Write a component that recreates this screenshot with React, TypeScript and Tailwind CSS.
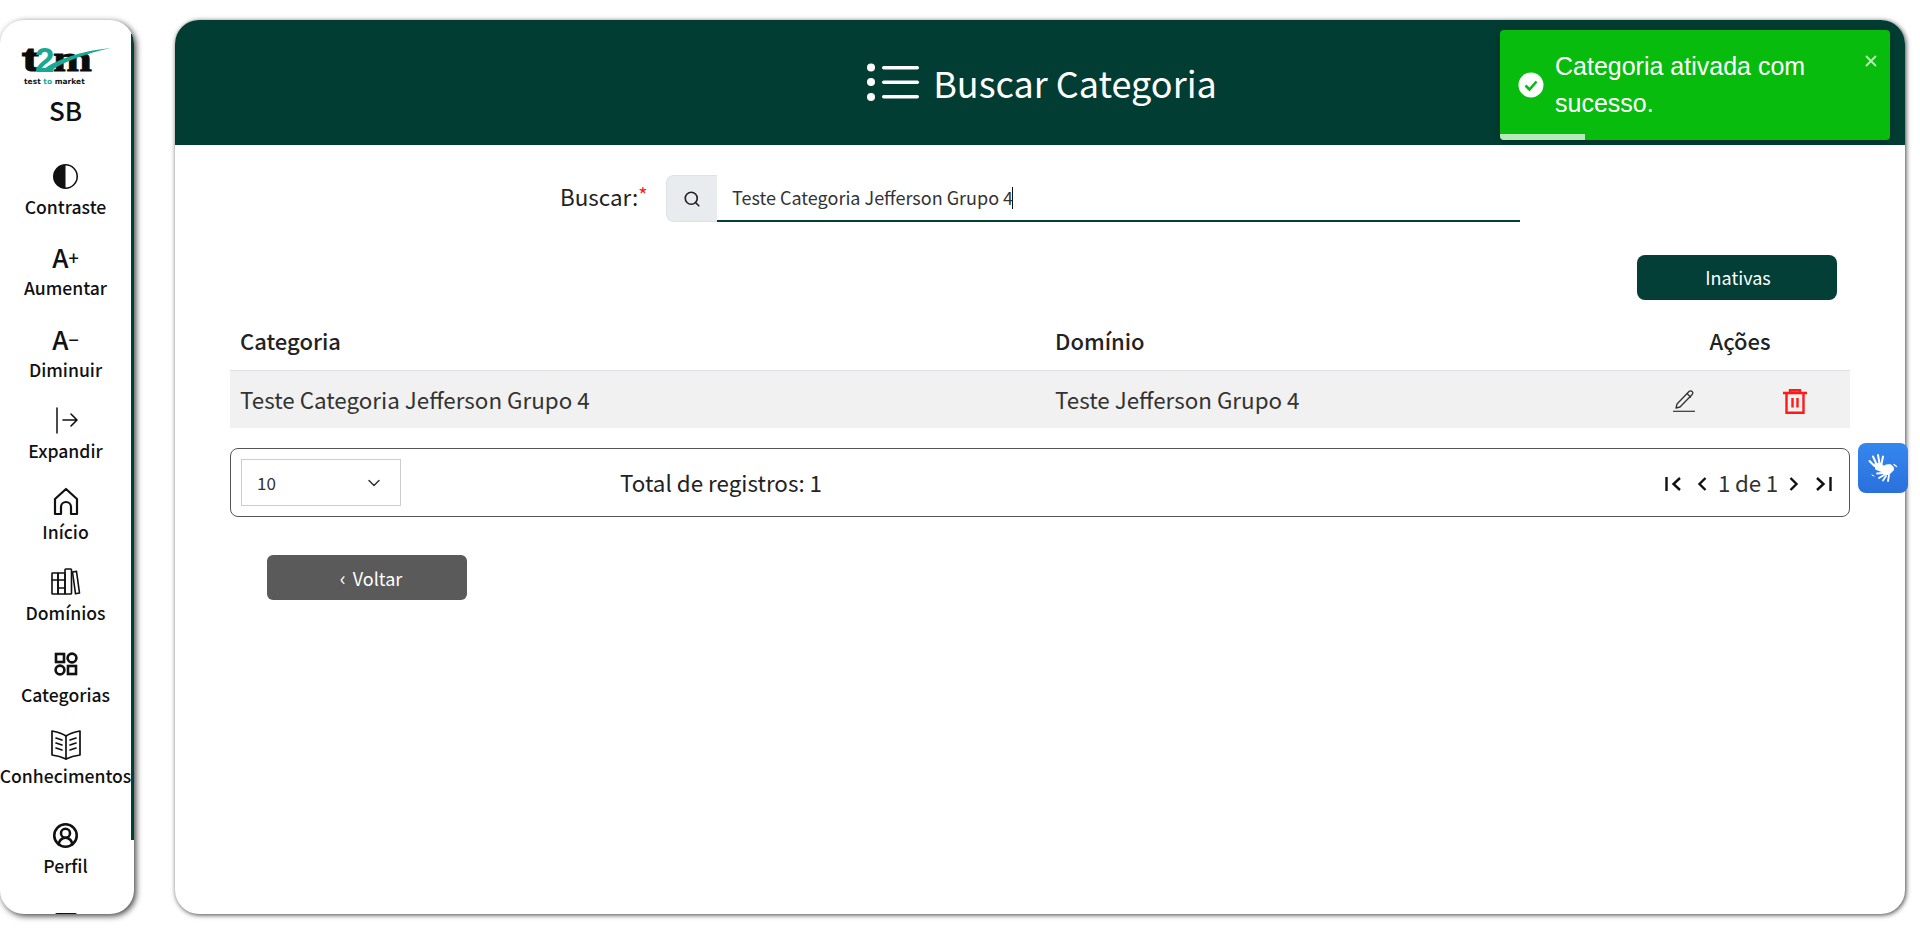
import React from "react";
import { Search, ChevronDown, X, CircleUserRound } from "lucide-react";
import { BsCircleHalf } from "react-icons/bs";

const stroke = {
  fill: "none",
  stroke: "currentColor",
  strokeWidth: 1.8,
  strokeLinecap: "round" as const,
  strokeLinejoin: "round" as const,
};

function T2mLogo() {
  return (
    <svg width="92" height="42" viewBox="0 0 92 42" className="overflow-visible">
      <text x="2" y="26" fontFamily="Liberation Sans" fontWeight="700" fontSize="34" fill="#0b0b0b" stroke="#0b0b0b" strokeWidth="1" textLength="17" lengthAdjust="spacingAndGlyphs">
        t
      </text>
      <text x="33" y="26" fontFamily="Liberation Serif" fontWeight="700" fontSize="36" fill="#0b0b0b" stroke="#0b0b0b" strokeWidth="0.8" textLength="39" lengthAdjust="spacingAndGlyphs">
        m
      </text>
      <text x="15" y="27" fontFamily="Liberation Sans" fontWeight="700" fontSize="35" fill="#1aa893">
        2
      </text>
      <path d="M20 27C34 15 60 6 91 3C68 8 44 16 29 27Z" fill="#1aa893" />
      <text x="4" y="38.500" fontFamily="DejaVu Sans" fontWeight="700" fontSize="7.500" fill="#111">
        test <tspan fill="#1aa893">to</tspan> market
      </text>
    </svg>
  );
}

function ExpandIcon() {
  return (
    <svg width="26" height="28" viewBox="0 0 26 28" {...stroke}>
      <path d="M4 2v25" strokeWidth="1.5" />
      <path d="M10 14h14M18 8l6 6-6 6" strokeWidth="1.6" />
    </svg>
  );
}

function HomeIcon() {
  return (
    <svg width="26" height="29" viewBox="0 0 26 29" {...stroke} strokeWidth="2.200">
      <path d="M2 27V12L13 2l11 10v15h-6v-7a5 5 0 0 0-10 0v7Z" />
    </svg>
  );
}

function BooksIcon() {
  return (
    <svg width="30" height="28" viewBox="0 0 30 28" {...stroke} strokeWidth="1.600">
      <rect x="1" y="5" width="6" height="21" rx="0.5" />
      <rect x="7" y="5" width="7" height="21" rx="0.5" />
      <path d="M1 12h13M7 20h7" />
      <rect x="14" y="1" width="6.5" height="25" rx="0.8" />
      <path d="M21.500 4l4-0.600L28.500 25l-4 .8Z" />
    </svg>
  );
}

function CategoriesIcon() {
  return (
    <svg width="24" height="24" viewBox="0 0 24 24" {...stroke} strokeWidth="2.600" strokeLinecap="butt" strokeLinejoin="miter">
      <rect x="2" y="2" width="8" height="8" />
      <circle cx="18" cy="6" r="4.400" />
      <circle cx="6" cy="18" r="4.400" />
      <rect x="14" y="14" width="8" height="8" />
    </svg>
  );
}

function BookOpenIcon() {
  return (
    <svg width="32" height="32" viewBox="0 0 32 32" {...stroke} strokeWidth="1.700">
      <path d="M16 7C12 4 7 3 2 2v24c5 .6 10 2 14 4 4-2 9-3.400 14-4V2c-5 1-10 2-14 5Z" />
      <path d="M16 7v23" />
      <path d="M6 9l6 2M6 14l6 2M6 19l6 2M26 9l-6 2M26 14l-6 2M26 19l-6 2" />
    </svg>
  );
}

function MenuListIcon() {
  return (
    <svg width="54" height="38" viewBox="0 0 54 38" fill="white">
      <circle cx="5" cy="4.500" r="4" />
      <circle cx="5" cy="19" r="4" />
      <circle cx="5" cy="34" r="4" />
      <rect x="16" y="3" width="37" height="3.500" rx="1.700" />
      <rect x="16" y="17.500" width="37" height="3.500" rx="1.700" />
      <rect x="16" y="32" width="37" height="3.500" rx="1.700" />
    </svg>
  );
}

function PencilIcon() {
  return (
    <svg width="24" height="24" viewBox="0 0 24 24" fill="none" stroke="#333" strokeWidth="1.300" strokeLinejoin="round">
      <path d="M5 16L17 3.500a2.200 2.200 0 0 1 3.200 0a2.200 2.200 0 0 1 0 3L8 19l-4 1Z" />
      <path d="M15 5.500l4 4" />
      <path d="M1 23.300h22" strokeWidth="1.200" />
    </svg>
  );
}

function TrashIcon() {
  return (
    <svg width="24" height="25" viewBox="0 0 24 25" fill="none" stroke="#ff1a1a" strokeWidth="2.400" className="mt-[4px]">
      <path d="M0 4h24M7 4V1.200h10V4" />
      <path d="M3.500 4v19.800h17V4" />
      <path d="M9.500 9v9.500M14.500 9v9.500" />
    </svg>
  );
}

function SignHandsIcon() {
  return (
    <svg width="32" height="32" viewBox="0 0 32 32" fill="none" stroke="white" strokeLinecap="round" strokeLinejoin="round">
      <path d="M2.500 9l5 5M6 4.500l3.500 7.500M11 3l1.500 8.500M16 4.500l-1.500 7.500" strokeWidth="2" />
      <path d="M8 12l1 5 5 2 3-4-3-3Z" fill="white" strokeWidth="1.500" />
      <path d="M15 16c2-3 6-4 9-3 2 1 3 3 2.500 5l-4 4-5 1-3-3Z" fill="white" strokeWidth="1" />
      <path d="M16 21l-6 0.500M17 23l-5 3M19 24l-3 4.500M22 23l-1 6" strokeWidth="1.800" />
      <path d="M27 12.500l2.500 2" strokeWidth="1.300" />
      <path d="M5 23l2 1" strokeWidth="1" />
    </svg>
  );
}

function FontStep({ sign }: { sign: string }) {
  return (
    <span className="flex items-center text-[26px] leading-none font-medium">
      A<span className="text-[18px] leading-none">{sign}</span>
    </span>
  );
}

const navItems: { label: string; icon: React.ReactNode }[] = [
  { label: "Contraste", icon: <BsCircleHalf size={25} /> },
  { label: "Aumentar", icon: <FontStep sign="+" /> },
  { label: "Diminuir", icon: <FontStep sign="−" /> },
  { label: "Expandir", icon: <ExpandIcon /> },
  { label: "Início", icon: <HomeIcon /> },
  { label: "Domínios", icon: <BooksIcon /> },
  { label: "Categorias", icon: <CategoriesIcon /> },
  { label: "Conhecimentos", icon: <BookOpenIcon /> },
];

function NavItem({ label, icon, className = "" }: { label: string; icon: React.ReactNode; className?: string }) {
  return (
    <div className={`h-[81.3px] shrink-0 flex flex-col items-center ${className}`}>
      <div className="h-[38px] flex items-center justify-center text-[#111]">{icon}</div>
      <span className="text-[17.600px] leading-[24px] font-medium text-[#111] whitespace-nowrap">{label}</span>
    </div>
  );
}

function Sidebar() {
  return (
    <aside className="relative w-[134px] shrink-0 h-full bg-white rounded-[24px] overflow-hidden shadow-[2px_2px_6px_rgba(0,0,0,0.75)]">
      <div className="absolute right-0 top-[14px] w-[3px] h-[806px] bg-[#033f36]" />
      <div className="flex flex-col items-center pt-[25px] pr-[3px]">
        <T2mLogo />
        <span className="text-[26px] leading-[34px] mt-[6px] font-medium text-[#111]">SB</span>
        <div className="h-[30px] shrink-0" />
        <div className="flex flex-col self-stretch">
          {navItems.map((item) => (
            <NavItem key={item.label} label={item.label} icon={item.icon} />
          ))}
          <NavItem label="Perfil" icon={<CircleUserRound size={27} strokeWidth={2.300} />} className="mt-[9px]" />
          <div className="mt-[15px] mx-auto w-[22px] h-[3px] rounded-t-[2px] bg-[#111]" />
        </div>
      </div>
    </aside>
  );
}

function Toast() {
  return (
    <div className="absolute top-[10px] right-[15px] w-[390px] h-[110px] rounded-[4px] overflow-hidden bg-[#07bc0c] shadow-[0_1px_10px_rgba(0,0,0,0.25)] text-white font-['Liberation_Sans',sans-serif]">
      <div className="flex items-center h-full pl-[18px] pr-[34px]">
        <svg width="26" height="26" viewBox="0 0 26 26" className="shrink-0">
          <circle cx="13" cy="13" r="12.500" fill="white" />
          <path d="M7.500 13.500l4 4 7-8" fill="none" stroke="#07bc0c" strokeWidth="2.600" />
        </svg>
        <p className="ml-[11px] text-[25px] leading-[37px]">Categoria ativada com sucesso.</p>
      </div>
      <X size={18} strokeWidth={2.500} className="absolute top-[22px] right-[10px] text-white opacity-70" />
      <div className="absolute left-0 bottom-0 h-[6px] w-[85px] bg-white opacity-70" />
    </div>
  );
}

function SearchRow() {
  return (
    <div className="flex items-start pl-[385px] pt-[30px]">
      <label className="w-[106px] text-[22.400px] leading-[40px] text-[#222]">
        Buscar:<span className="text-[#ff1a1a] align-[3px] text-[20px]">*</span>
      </label>
      <div className="w-[51px] h-[47px] flex items-center justify-center bg-[#e9ecef] border border-[#dee2e6] border-r-0 rounded-l-[8px]">
        <Search size={18} strokeWidth={2.200} className="text-[#222]" />
      </div>
      <div className="w-[803px] h-[47px] flex items-center pl-[15px] border-b-2 border-[#033f36] text-[18px] text-[#333]">
        Teste Categoria Jefferson Grupo 4<span className="inline-block w-px h-[22px] bg-[#111] -ml-[1px]" />
      </div>
    </div>
  );
}

function ResultsTable() {
  return (
    <div className="mx-[55px] w-[1620px]">
      <div className="grid grid-cols-[815px_auto_230px] h-[59px] items-center px-[10px] text-[22px] font-medium text-[#222]">
        <span>Categoria</span>
        <span>Domínio</span>
        <span className="text-center pl-[30px]">Ações</span>
      </div>
      <div className="grid grid-cols-[815px_auto_230px] h-[58px] items-center px-[10px] bg-[#f1f1f1] border-t border-[#dfdfe8] text-[22.400px] text-[#333]">
        <span>Teste Categoria Jefferson Grupo 4</span>
        <span>Teste Jefferson Grupo 4</span>
        <div className="flex items-center justify-between pl-[62px] pr-[33px]">
          <PencilIcon />
          <TrashIcon />
        </div>
      </div>
    </div>
  );
}

function Pagination() {
  return (
    <div className="mx-[55px] mt-[20px] w-[1620px] h-[69px] flex items-center border border-[#555] rounded-[8px] pl-[10px] pr-[16px]">
      <div className="w-[160px] h-[47px] flex items-center justify-between pl-[15px] pr-[16px] border border-[#ccc] text-[17px] text-[#333]">
        <span>10</span>
        <ChevronDown size={20} strokeWidth={1.800} className="text-[#333]" />
      </div>
      <span className="ml-[219px] text-[22.400px] text-[#222]">Total de registros: 1</span>
      <div className="ml-auto flex items-center text-[22.400px] text-[#333]">
        <svg width="18" height="18" viewBox="0 0 18 18" fill="none" stroke="#111" strokeWidth="2.400" className="mt-[3px]">
          <path d="M2.500 2v14M16 3l-6.500 6 6.500 6" />
        </svg>
        <svg width="10" height="18" viewBox="0 0 10 18" fill="none" stroke="#111" strokeWidth="2.400" className="ml-[15px] mt-[3px]">
          <path d="M8.500 3L2.500 9l6 6" />
        </svg>
        <span className="mx-[11px] tracking-[-0.2px]">1 de 1</span>
        <svg width="10" height="18" viewBox="0 0 10 18" fill="none" stroke="#111" strokeWidth="2.400" className="mt-[3px]">
          <path d="M1.500 3l6 6-6 6" />
        </svg>
        <svg width="18" height="18" viewBox="0 0 18 18" fill="none" stroke="#111" strokeWidth="2.400" className="ml-[16px] mt-[3px]">
          <path d="M2 3l6.500 6-6.500 6M15.500 2v14" />
        </svg>
      </div>
    </div>
  );
}

export default function App() {
  return (
    <div className="relative h-[934px] w-[1920px] overflow-hidden bg-white flex py-[20px] pr-[15px] font-['Noto_Sans_CJK_SC','Noto_Sans',sans-serif]">
      <Sidebar />
      <main className="relative ml-[41px] flex-1 h-full bg-white rounded-[24px] overflow-hidden shadow-[1px_1px_5px_rgba(0,0,0,0.75)]">
        <header className="h-[125px] bg-[#023d34] flex items-center justify-center pl-[3px] pb-[2px] text-white">
          <MenuListIcon />
          <h1 className="ml-[13px] text-[36px] font-normal leading-none">Buscar Categoria</h1>
        </header>
        <Toast />
        <SearchRow />
        <div className="flex justify-end pr-[68px] mt-[33px]">
          <button className="w-[200px] h-[45px] pl-[2px] rounded-[8px] bg-[#033f36] text-white text-[18px]">Inativas</button>
        </div>
        <div className="mt-[11px]">
          <ResultsTable />
        </div>
        <Pagination />
        <div className="mt-[38px] ml-[92px]">
          <button className="w-[200px] h-[45px] pl-[8px] rounded-[6px] bg-[#5a5a5a] text-white text-[18px]">
            <span className="mr-[3px] text-[20px]">‹</span> Voltar
          </button>
        </div>
      </main>
      <div className="absolute left-[1858px] top-[443px] w-[50px] h-[50px] rounded-[8px] bg-gradient-to-b from-[#3587ee] to-[#2a70dc] flex items-center justify-center">
        <SignHandsIcon />
      </div>
    </div>
  );
}
